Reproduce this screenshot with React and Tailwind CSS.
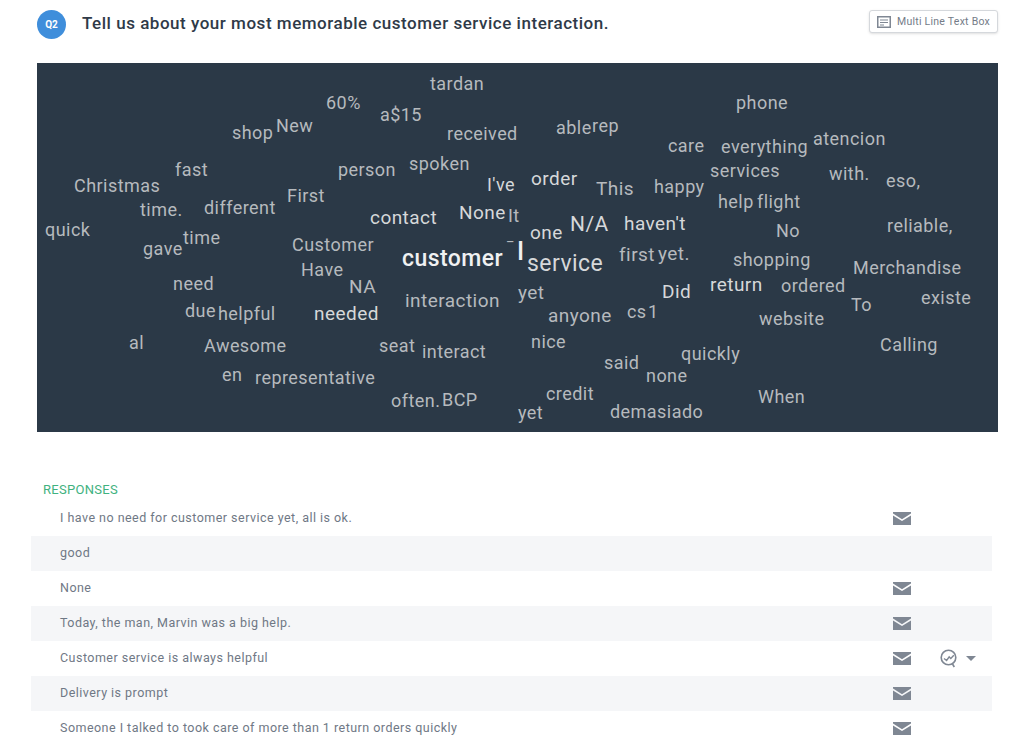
const words = [
  ['tardan', 430, 84, 18, 'a'],
  ['phone', 736, 103, 18, 'a'],
  ['60%', 326, 103, 18, 'a'],
  ['a$15', 380, 115, 18, 'a'],
  ['New', 276, 126, 18, 'a'],
  ['shop', 232, 133, 18, 'a'],
  ['received', 447, 134, 18, 'a'],
  ['able', 556, 128, 18, 'a'],
  ['rep', 592, 126, 18, 'a'],
  ['care', 668, 146, 18, 'a'],
  ['everything', 721, 147, 18, 'a'],
  ['atencion', 813, 139, 18, 'a'],
  ['fast', 175, 170, 18, 'a'],
  ['person', 338, 170, 18, 'a'],
  ['spoken', 409, 164, 18, 'a'],
  ['services', 710, 171, 18, 'a'],
  ['with.', 829, 174, 18, 'a'],
  ['eso,', 886, 181, 18, 'a'],
  ['Christmas', 74, 186, 18, 'a'],
  ["I've", 487, 185, 18, 'b'],
  ['order', 531, 178, 19, 'b'],
  ['This', 596, 188, 19, 'a'],
  ['happy', 654, 187, 18, 'a'],
  ['First', 287, 196, 18, 'a'],
  ['help', 718, 202, 18, 'a'],
  ['flight', 757, 202, 18, 'a'],
  ['time.', 140, 210, 18, 'a'],
  ['different', 204, 208, 18, 'a'],
  ['contact', 370, 217, 19, 'b'],
  ['None', 459, 212, 19, 'b'],
  ['It', 508, 216, 18, 'a'],
  ['N/A', 570, 224, 21, 'b'],
  ["haven't", 624, 223, 19, 'b'],
  ['reliable,', 887, 226, 18, 'a'],
  ['quick', 45, 230, 18, 'a'],
  ['one', 530, 232, 19, 'b'],
  ['No', 776, 231, 18, 'a'],
  ['time', 183, 238, 18, 'a'],
  ['gave', 143, 249, 18, 'a'],
  ['Customer', 292, 245, 18, 'a'],
  ['customer', 402, 258, 23, 'w'],
  ['_', 507, 236, 14, 'a'],
  ['I', 517, 251, 25, 'w'],
  ['service', 527, 263, 23, 'b'],
  ['first', 619, 254, 19, 'a'],
  ['yet.', 658, 253, 19, 'a'],
  ['shopping', 733, 260, 18, 'a'],
  ['Have', 301, 270, 18, 'a'],
  ['Merchandise', 853, 268, 18, 'a'],
  ['need', 173, 284, 18, 'a'],
  ['NA', 349, 286, 19, 'a'],
  ['return', 710, 284, 19, 'b'],
  ['ordered', 781, 286, 18, 'a'],
  ['yet', 518, 292, 19, 'a'],
  ['Did', 662, 291, 19, 'b'],
  ['interaction', 405, 300, 19, 'a'],
  ['To', 851, 305, 18, 'a'],
  ['existe', 921, 298, 18, 'a'],
  ['due', 185, 311, 18, 'a'],
  ['helpful', 218, 314, 18, 'a'],
  ['needed', 314, 313, 19, 'b'],
  ['anyone', 548, 315, 19, 'a'],
  ['cs', 627, 312, 18, 'a'],
  ['1', 648, 312, 18, 'a'],
  ['website', 759, 319, 18, 'a'],
  ['al', 129, 343, 18, 'a'],
  ['Awesome', 204, 346, 18, 'a'],
  ['seat', 379, 346, 18, 'a'],
  ['nice', 531, 342, 18, 'a'],
  ['Calling', 880, 345, 18, 'a'],
  ['interact', 422, 352, 18, 'a'],
  ['quickly', 681, 354, 18, 'a'],
  ['said', 604, 363, 18, 'a'],
  ['none', 646, 376, 18, 'a'],
  ['en', 222, 375, 18, 'a'],
  ['representative', 255, 378, 18, 'a'],
  ['credit', 546, 394, 18, 'a'],
  ['When', 758, 397, 18, 'a'],
  ['BCP', 442, 400, 18, 'a'],
  ['often.', 391, 401, 18, 'a'],
  ['yet', 518, 413, 18, 'a'],
  ['demasiado', 610, 412, 18, 'a'],
];

const tones = {
  a: 'font-normal text-[#b6babe]',
  b: 'font-normal text-[#d6d8da]',
  w: 'font-medium text-[#f0f1f2]',
};

const responses = [
  { text: 'I have no need for customer service yet, all is ok.', mail: true },
  { text: 'good', mail: false },
  { text: 'None', mail: true },
  { text: 'Today, the man, Marvin was a big help.', mail: true },
  { text: 'Customer service is always helpful', mail: true, trend: true },
  { text: 'Delivery is prompt', mail: true },
  { text: 'Someone I talked to took care of more than 1 return orders quickly', mail: true },
];

function MailIcon() {
  return (
    <svg width="18" height="13" viewBox="0 0 18 13" className="block">
      <path d="M0 0h18v1.6L9 7.2 0 1.6z" fill="#7f8793" />
      <path d="M0 3.4l9 5.6 9-5.6V13H0z" fill="#7f8793" />
    </svg>
  );
}

function TrendIcon() {
  return (
    <svg width="18" height="19" viewBox="0 0 18 19" fill="none" stroke="#7f8793" strokeWidth="1.6" className="block">
      <circle cx="8.5" cy="8.5" r="7.3" />
      <path d="M4 9.5l2.6 2 2.6-3.6 1.6 1.5 3-3.2" strokeWidth="1.4" />
      <path d="M12.5 15l1.8 3" />
    </svg>
  );
}

function BoxIcon() {
  return (
    <svg width="14" height="12" viewBox="0 0 14 12" fill="none" className="block">
      <rect x="0.75" y="0.75" width="12.5" height="10.5" stroke="#7f8793" strokeWidth="1.5" />
      <path d="M3 4h8M3 6.5h8M3 9h4" stroke="#7f8793" strokeWidth="1.1" />
    </svg>
  );
}

export default function App() {
  return (
    <div className="w-[1024px] h-[744px] overflow-hidden bg-white font-['Roboto',sans-serif]">
      {/* question header */}
      <div className="h-[63px] flex items-start pl-[37px] pr-[26px]">
        <div className="mt-[10px] w-[29px] h-[29px] rounded-full bg-[#3f8edb] text-white text-[10px] font-bold flex items-center justify-center">
          Q2
        </div>
        <h1 className="ml-[16px] mt-[12px] text-[17px] leading-[22px] font-medium tracking-[0.52px] text-[#2f3a48]">
          Tell us about your most memorable customer service interaction.
        </h1>
        <div className="ml-auto mt-[10px] w-[129px] h-[23px] flex items-center gap-[6px] pl-[7px] bg-white border border-[#d5d8dc] rounded-[3px] shadow-sm text-[10.5px] tracking-[0.25px] text-[#747c88]">
          <BoxIcon />
          <span>Multi Line Text Box</span>
        </div>
      </div>

      {/* word cloud */}
      <div className="relative ml-[37px] w-[961px] h-[369px] bg-[#2b3947] overflow-hidden">
        {words.map(([word, x, y, size, tone], i) => (
          <span
            key={i}
            className={`absolute leading-none whitespace-nowrap tracking-[0.45px] -translate-y-1/2 ${tones[tone]}`}
            style={{ left: x - 37, top: y - 63, fontSize: size }}
          >
            {word}
          </span>
        ))}
      </div>

      {/* responses */}
      <div className="mt-[51px] ml-[43px] text-[13px] leading-[14px] tracking-[0.3px] text-[#3fb27f]">RESPONSES</div>
      <div className="mt-[4px] ml-[31px] w-[961px] text-[12.5px] tracking-[0.47px] text-[#6f7885]">
        {responses.map((row, i) => (
          <div key={i} className={`h-[35px] flex items-center pl-[29px] ${i % 2 === 1 ? 'bg-[#f5f6f8]' : ''}`}>
            <span className="w-[833px]">{row.text}</span>
            <div className="w-[18px]">{row.mail && <MailIcon />}</div>
            {row.trend && (
              <div className="ml-[29px] flex items-center gap-[8px]">
                <TrendIcon />
                <div className="w-0 h-0 border-x-[5px] border-x-transparent border-t-[5px] border-t-[#7f8793]" />
              </div>
            )}
          </div>
        ))}
      </div>
    </div>
  );
}
